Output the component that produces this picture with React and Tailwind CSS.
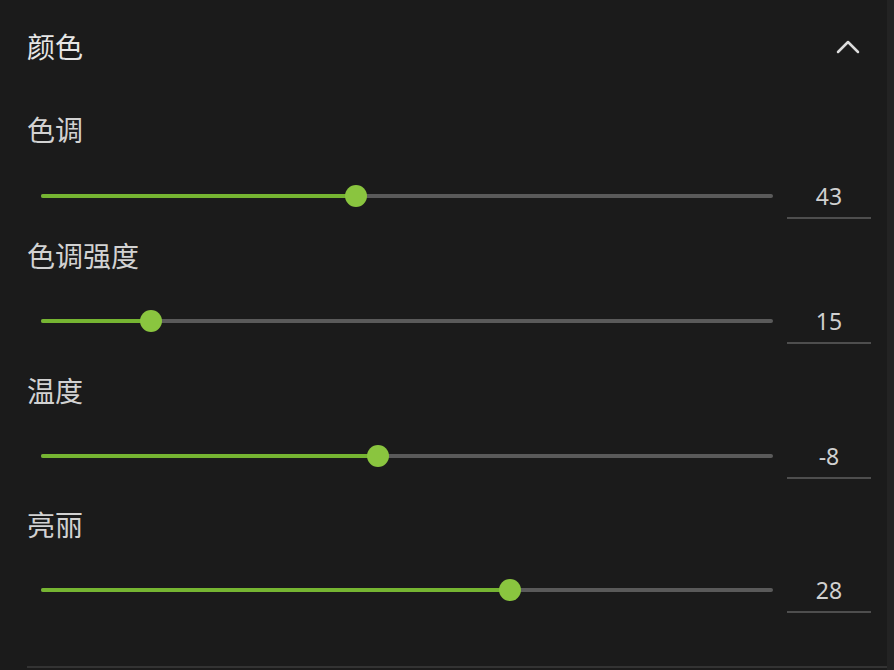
import { ChevronUp } from 'lucide-react';

const TRACK_WIDTH = 732;

// thumb offsets measured along the track, in px
const rows = [
  { label: '色调', value: '43', offset: 315, labelGap: 'mt-[49px]', sliderGap: 'mt-[34px]' },
  { label: '色调强度', value: '15', offset: 110, labelGap: 'mt-[20px]', sliderGap: 'mt-[33px]' },
  { label: '温度', value: '-8', offset: 337, labelGap: 'mt-[30px]', sliderGap: 'mt-[33px]' },
  { label: '亮丽', value: '28', offset: 469, labelGap: 'mt-[29px]', sliderGap: 'mt-[33px]' },
];

function Slider({ offset }) {
  const pct = (offset / TRACK_WIDTH) * 100;
  return (
    <div className="relative h-[30px] w-[732px] flex items-center">
      <div className="h-[4px] w-full rounded-full bg-[#5a5a5a]" />
      <div
        className="absolute left-0 top-[13px] h-[4px] rounded-full bg-[#76b532]"
        style={{ width: `${pct}%` }}
      />
      <div
        className="absolute top-[4px] h-[22px] w-[22px] -translate-x-1/2 rounded-full bg-[#8ac53f]"
        style={{ left: `${pct}%` }}
      />
    </div>
  );
}

export default function App() {
  return (
    <div
      className="flex h-[670px] w-[894px] overflow-hidden bg-[#1b1b1b]"
      style={{ fontFamily: '"Noto Sans", "Noto Sans CJK SC", sans-serif' }}
    >
      <div className="flex w-[887px] flex-col">
        <div className="mt-[30px] flex h-[34px] items-center justify-between pl-[27px] pr-[19px]">
          <span className="text-[28px] leading-[34px] text-[#e6e6e6]">颜色</span>
          <ChevronUp size={40} strokeWidth={1.5} className="text-[#dcdcdc]" />
        </div>

        {rows.map((row) => (
          <div key={row.label} className="flex flex-col">
            <div className={`${row.labelGap} pl-[27px] text-[28px] leading-[34px] text-[#d2d2d2]`}>
              {row.label}
            </div>
            <div className={`${row.sliderGap} flex items-start pl-[41px]`}>
              <Slider offset={row.offset} />
              <div className="ml-[14px] flex w-[84px] flex-col">
                <div className="h-[30px] text-center text-[23px] leading-[30px] text-[#d0d0d0]">
                  {row.value}
                </div>
                <div className="mt-[6px] h-[2px] bg-[#4e4e4e]" />
              </div>
            </div>
          </div>
        ))}

        <div className="mt-auto mb-[2px] ml-[27px] h-[2px] bg-[#333333]" />
      </div>
      <div className="h-full w-[7px] bg-[#232323]" />
    </div>
  );
}
